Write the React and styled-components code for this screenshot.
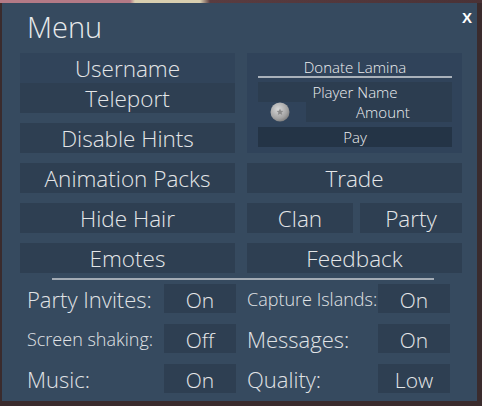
import React from "react";
import styled, { createGlobalStyle } from "styled-components";

const GlobalStyle = createGlobalStyle`
  html, body {
    margin: 0;
    padding: 0;
  }
  body {
    width: 482px;
    height: 406px;
    overflow: hidden;
    background:
      linear-gradient(90deg, #b47a86 0px, #b47a86 130px, #d9cfb0 135px, #d9cfb0 200px, #5a3c40 210px, #4a3236 100%) top / 100% 3px no-repeat,
      #3a2b2d;
    font-family: "Open Sans", "Liberation Sans", sans-serif;
  }
`;

const Scene = styled.div`
  padding: 3px 5px 5px 2px;
`;

const Panel = styled.div`
  width: 475px;
  height: 398px;
  box-sizing: border-box;
  background: #364a5f;
  padding: 4px 15px 0 18px;
  color: #e4e6e8;
  font-weight: 300;
`;

const Header = styled.div`
  display: flex;
  justify-content: space-between;
  align-items: flex-start;
  height: 46px;
`;

const Title = styled.h1`
  margin: 0 0 0 7px;
  font-size: 29px;
  font-weight: 300;
  line-height: 40px;
  color: #e8eaec;
`;

const Close = styled.div`
  font-family: "Liberation Sans", sans-serif;
  font-weight: 700;
  font-size: 15px;
  line-height: 15px;
  color: #ffffff;
  margin: 3px -10px 0 0;
`;

const Grid = styled.div`
  display: grid;
  grid-template-columns: 215px 215px;
  grid-template-rows: 100px 30px 30px 30px;
  column-gap: 12px;
  row-gap: 10px;
`;

const Stack = styled.div`
  display: flex;
  flex-direction: column;
  gap: 10px;
`;

const Button = styled.div`
  display: flex;
  align-items: center;
  justify-content: center;
  box-sizing: border-box;
  height: ${(p) => p.h || 30}px;
  padding-top: 2px;
  background: ${(p) => p.bg || "#2e3f52"};
  font-size: 22.5px;
  line-height: 1;
  white-space: nowrap;
`;

const Split = styled.div`
  display: grid;
  grid-template-columns: 106px 102px;
  column-gap: 7px;
`;

const Donate = styled.div`
  background: #30435a;
  padding: 0 10px 0 11px;
  display: flex;
  flex-direction: column;
  font-size: 15px;
  color: #eceef0;
`;

const DonateTitle = styled.div`
  height: 22px;
  display: flex;
  align-items: flex-end;
  justify-content: center;
  border-bottom: 2px solid #a9b1ba;
  padding-bottom: 1px;
  line-height: 1;
  box-sizing: content-box;
`;

const Field = styled.div`
  display: flex;
  align-items: center;
  justify-content: center;
  height: 20px;
  margin-top: ${(p) => p.mt || 0}px;
  background: ${(p) => p.bg || "#2c3d50"};
`;

const AmountRow = styled.div`
  display: flex;
  height: 20px;
`;

const CoinCell = styled.div`
  width: 48px;
  display: flex;
  align-items: center;
  padding-left: 12px;
  box-sizing: border-box;
`;

const AmountBox = styled.div`
  flex: 1;
  display: flex;
  align-items: center;
  justify-content: center;
  padding-left: 8px;
  background: #2c3d50;
`;

const Rule = styled.div`
  width: 382px;
  height: 2px;
  background: #a3abb4;
  margin: 5px 0 4px 32px;
`;

const Settings = styled.div`
  display: grid;
  grid-template-columns: 209px 203px;
  column-gap: 11px;
  row-gap: 11px;
  padding-left: 7px;
`;

const Setting = styled.div`
  display: flex;
  align-items: center;
  height: 29px;
`;

const Label = styled.div`
  flex: 1;
  padding-top: 1px;
  font-size: ${(p) => p.size || 22}px;
  white-space: nowrap;
  color: #e0e3e6;
`;

const Toggle = styled.div`
  width: 72px;
  height: 29px;
  box-sizing: border-box;
  padding-top: 2px;
  display: flex;
  align-items: center;
  justify-content: center;
  background: #2e3f52;
  font-size: 21px;
`;

const Coin = () => (
  <svg width="20" height="20" viewBox="0 0 20 20">
    <defs>
      <radialGradient id="cg" cx="40%" cy="35%" r="70%">
        <stop offset="0%" stopColor="#d8d8d8" />
        <stop offset="70%" stopColor="#a2a2a2" />
        <stop offset="100%" stopColor="#7a7a7a" />
      </radialGradient>
    </defs>
    <circle cx="10" cy="10" r="9.5" fill="url(#cg)" />
    <path d="M10 6.5l1 2.3 2.4.2-1.8 1.6.6 2.4-2.2-1.3-2.2 1.3.6-2.4-1.8-1.6 2.4-.2z" fill="#8a8a8a" />
  </svg>
);

const settings = [
  ["Party Invites:", 22, "On", "Capture Islands:", 18, "On"],
  ["Screen shaking:", 18, "Off", "Messages:", 22, "On"],
  ["Music:", 22, "On", "Quality:", 22, "Low"],
];

export default function App() {
  return (
    <Scene>
      <GlobalStyle />
      <Panel>
        <Header>
          <Title>Menu</Title>
          <Close>X</Close>
        </Header>
        <Grid>
          <Stack>
            <div>
              <Button bg="#31445a">Username</Button>
              <Button>Teleport</Button>
            </div>
            <Button>Disable Hints</Button>
          </Stack>
          <Donate>
            <DonateTitle>Donate Lamina</DonateTitle>
            <Field mt={4}>Player Name</Field>
            <AmountRow>
              <CoinCell>
                <Coin />
              </CoinCell>
              <AmountBox>Amount</AmountBox>
            </AmountRow>
            <Field mt={5} bg="#243446">Pay</Field>
          </Donate>
          <Button>Animation Packs</Button>
          <Button>Trade</Button>
          <Button>Hide Hair</Button>
          <Split>
            <Button>Clan</Button>
            <Button>Party</Button>
          </Split>
          <Button>Emotes</Button>
          <Button>Feedback</Button>
        </Grid>
        <Rule />
        <Settings>
          {settings.map((r) => (
            <React.Fragment key={r[0]}>
              <Setting>
                <Label size={r[1]}>{r[0]}</Label>
                <Toggle>{r[2]}</Toggle>
              </Setting>
              <Setting>
                <Label size={r[4]}>{r[3]}</Label>
                <Toggle>{r[5]}</Toggle>
              </Setting>
            </React.Fragment>
          ))}
        </Settings>
      </Panel>
    </Scene>
  );
}
